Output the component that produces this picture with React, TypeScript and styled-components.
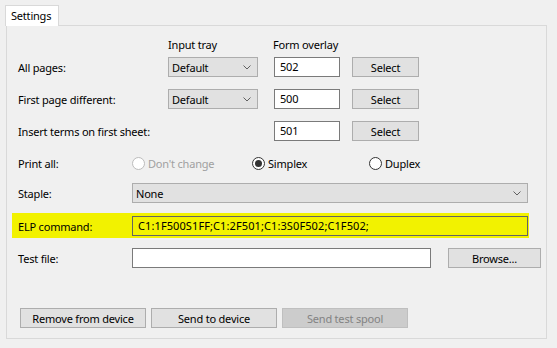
import styled, { createGlobalStyle } from "styled-components";

const GlobalStyle = createGlobalStyle`
	html, body {
		margin: 0;
		padding: 0;
		background: #f0f0f0;
	}
	body {
		font-family: "Noto Sans", "Open Sans", sans-serif;
		font-size: 11px;
		letter-spacing: -0.2px;
		color: #000;
	}
`;

// Small chevron drawn on the right of a combo box
function Chevron() {
	return (
		<svg width="8" height="5" viewBox="0 0 8 5">
			<polyline points="0.5,0.5 4,4 7.5,0.5" fill="none" stroke="#606060" strokeWidth="1" />
		</svg>
	);
}

type ComboProps = { value: string; width: number };

function Combo(props: ComboProps) {
	return (
		<ComboBox $width={props.width}>
			<span>{props.value}</span>
			<Chevron />
		</ComboBox>
	);
}

type RadioProps = { label: string; checked?: boolean; disabled?: boolean; width: number };

function Radio(props: RadioProps) {
	return (
		<RadioOption $width={props.width} $disabled={props.disabled}>
			<RadioCircle $checked={props.checked} $disabled={props.disabled} />
			<span>{props.label}</span>
		</RadioOption>
	);
}

const overlayRows = [
	{ label: "All pages:", tray: "Default", overlay: "502" },
	{ label: "First page different:", tray: "Default", overlay: "500" },
	{ label: "Insert terms on first sheet:", tray: null, overlay: "501" },
];

export default function App() {
	return (
		<>
			<GlobalStyle />
			<Window>
				<TabStrip>
					<Tab>Settings</Tab>
				</TabStrip>
				<Panel>
					<HeaderRow>
						<HeaderCell $width={105}>Input tray</HeaderCell>
						<HeaderCell $width={80}>Form overlay</HeaderCell>
					</HeaderRow>

					{overlayRows.map((row) => (
						<Row key={row.label}>
							<Label>{row.label}</Label>
							<OverlayControls>
								<TraySlot>{row.tray ? <Combo value={row.tray} width={90} /> : null}</TraySlot>
								<TextBox $width={66}>{row.overlay}</TextBox>
								<Button $width={67}>Select</Button>
							</OverlayControls>
						</Row>
					))}

					<Row>
						<Label>Print all:</Label>
						<Radio label="Don't change" disabled width={120} />
						<Radio label="Simplex" checked width={117} />
						<Radio label="Duplex" width={80} />
					</Row>

					<Row $gap={10}>
						<Label>Staple:</Label>
						<Combo value="None" width={396} />
					</Row>

					<HighlightRow>
						<Label>ELP command:</Label>
						<TextBox $width={396} $highlight>
							C1:1F500S1FF;C1:2F501;C1:3S0F502;C1F502;
						</TextBox>
					</HighlightRow>

					<Row $gap={10}>
						<Label>Test file:</Label>
						<TextBox $width={299} />
						<Button $width={93} $left={17}>
							Browse...
						</Button>
					</Row>

					<ActionBar>
						<Button $width={126}>Remove from device</Button>
						<Button $width={126}>Send to device</Button>
						<Button $width={126} $disabled>
							Send test spool
						</Button>
					</ActionBar>
				</Panel>
			</Window>
		</>
	);
}

// Styled Components
const Window = styled.div`
	padding: 5px 10px 10px 6px;
	width: 541px;
`;

const TabStrip = styled.div`
	display: flex;
	margin-left: -1px;
`;

const Tab = styled.div`
	position: relative;
	z-index: 1;
	height: 20px;
	line-height: 20px;
	padding: 0 5px;
	width: 42px;
	background: #ffffff;
	border: 1px solid #d9d9d9;
	border-bottom: none;
	margin-bottom: -1px;
`;

const Panel = styled.div`
	border: 1px solid #d9d9d9;
	background: #f0f0f0;
	padding: 11px 0 10px 5px;
	display: flex;
	flex-direction: column;
	align-items: flex-start;
`;

const HeaderRow = styled.div`
	display: flex;
	height: 16px;
	line-height: 16px;
	padding-left: 156px;
	margin-bottom: 4px;
`;

const HeaderCell = styled.div<{ $width: number }>`
	width: ${(p) => p.$width}px;
`;

const Row = styled.div<{ $gap?: number }>`
	display: flex;
	align-items: center;
	height: 20px;
	padding: 0 6px;
	margin-top: ${(p) => (p.$gap === undefined ? 12 : p.$gap)}px;
	&:nth-child(2) {
		margin-top: 0;
	}
`;

const HighlightRow = styled.div`
	display: flex;
	align-items: center;
	height: 25px;
	margin-top: 10px;
	padding: 1px 1px 0 6px;
	box-sizing: border-box;
	background: #f2f200;
`;

const Label = styled.div`
	width: 114px;
	flex-shrink: 0;
	white-space: nowrap;
`;

const OverlayControls = styled.div`
	display: flex;
	align-items: center;
	padding-left: 36px;
`;

const TraySlot = styled.div`
	width: 106px;
	display: flex;
`;

const ComboBox = styled.div<{ $width: number }>`
	box-sizing: border-box;
	width: ${(p) => p.$width}px;
	height: 20px;
	padding: 0 6px 0 3px;
	display: flex;
	align-items: center;
	justify-content: space-between;
	background: #e1e1e1;
	border: 1px solid #adadad;
`;

const TextBox = styled.div<{ $width: number; $highlight?: boolean }>`
	box-sizing: border-box;
	width: ${(p) => p.$width}px;
	height: 20px;
	line-height: 18px;
	padding: 0 5px;
	background: ${(p) => (p.$highlight ? "#f2f200" : "#ffffff")};
	border: 1px solid ${(p) => (p.$highlight ? "#646464" : "#7a7a7a")};
	letter-spacing: ${(p) => (p.$highlight ? "0.1px" : "inherit")};
	white-space: nowrap;
	overflow: hidden;
`;

const Button = styled.div<{ $width: number; $disabled?: boolean; $left?: number }>`
	box-sizing: border-box;
	width: ${(p) => p.$width}px;
	height: 20px;
	margin-left: ${(p) => p.$left ?? 12}px;
	display: flex;
	align-items: center;
	justify-content: center;
	background: ${(p) => (p.$disabled ? "#cccccc" : "#e1e1e1")};
	border: 1px solid ${(p) => (p.$disabled ? "#bfbfbf" : "#adadad")};
	color: ${(p) => (p.$disabled ? "#838383" : "#000")};
`;

const RadioOption = styled.div<{ $width: number; $disabled?: boolean }>`
	width: ${(p) => p.$width}px;
	display: flex;
	align-items: center;
	gap: 3px;
	color: ${(p) => (p.$disabled ? "#a0a0a0" : "#000")};
`;

const RadioCircle = styled.span<{ $checked?: boolean; $disabled?: boolean }>`
	box-sizing: border-box;
	width: 13px;
	height: 13px;
	border-radius: 50%;
	background: #ffffff;
	border: 1px solid ${(p) => (p.$disabled ? "#bcbcbc" : "#333333")};
	display: flex;
	align-items: center;
	justify-content: center;
	&::after {
		content: "";
		display: ${(p) => (p.$checked ? "block" : "none")};
		width: 7px;
		height: 7px;
		border-radius: 50%;
		background: #333333;
	}
`;

const ActionBar = styled.div`
	display: flex;
	margin-top: 40px;
	padding-left: 8px;
	gap: 5px;
	& > div {
		margin-left: 0;
	}
`;
